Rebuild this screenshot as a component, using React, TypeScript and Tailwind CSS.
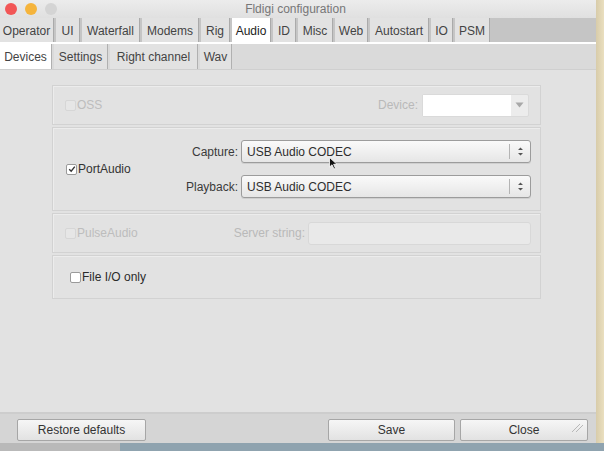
import React from 'react';

const topTabs = [
  { label: 'Operator', w: 'w-[54px]' },
  { label: 'UI', w: 'w-[24px]' },
  { label: 'Waterfall', w: 'w-[58px]' },
  { label: 'Modems', w: 'w-[57px]' },
  { label: 'Rig', w: 'w-[29px]' },
  { label: 'Audio', w: 'w-[39px]', active: true },
  { label: 'ID', w: 'w-[23px]' },
  { label: 'Misc', w: 'w-[35px]' },
  { label: 'Web', w: 'w-[33px]' },
  { label: 'Autostart', w: 'w-[59px]' },
  { label: 'IO', w: 'w-[22px]' },
  { label: 'PSM', w: 'w-[35px]' },
];

const subTabs = [
  { label: 'Devices', w: 'w-[52px]', active: true },
  { label: 'Settings', w: 'w-[54px]' },
  { label: 'Right channel', w: 'w-[88px]' },
  { label: 'Wav', w: 'w-[32px]' },
];

function Check({ checked, disabled }: { checked?: boolean; disabled?: boolean }) {
  return (
    <span
      className={`flex h-[11px] w-[11px] items-center justify-center rounded-[2px] border ${
        disabled ? 'border-[#d6d6d6] bg-[#e6e6e6]' : 'border-[#9a9a9a] bg-white'
      }`}
    >
      {checked && (
        <svg width="8" height="8" viewBox="0 0 8 8">
          <path d="M1.2 4.2 L3.2 6.2 L6.8 1.6" fill="none" stroke="#333" strokeWidth="1.4" />
        </svg>
      )}
    </span>
  );
}

function Select({ value }: { value: string }) {
  return (
    <div className="flex h-[23px] w-[290px] items-center rounded-[3px] border border-[#9c9c9c] bg-gradient-to-b from-[#fafafa] to-[#e6e6e6] shadow-[0_1px_0_#cfcfcf]">
      <span className="flex-1 pl-[5px] text-[12px] text-[#2e2e2e]">{value}</span>
      <span className="h-[15px] w-px bg-[#b4b4b4]" />
      <span className="flex w-[20px] justify-center">
        <svg width="7" height="11" viewBox="0 0 7 11">
          <path d="M1 4 L3.5 1.5 L6 4 Z M1 7 L3.5 9.5 L6 7 Z" fill="#555" />
        </svg>
      </span>
    </div>
  );
}

function Group({ className, children }: { className: string; children: React.ReactNode }) {
  return (
    <div className={`ml-[52px] flex w-[489px] items-center border border-[#d2d2d2] shadow-[inset_1px_1px_0_#ececec] ${className}`}>
      {children}
    </div>
  );
}

function Button({ label, className }: { label: string; className: string }) {
  return (
    <div
      className={`flex h-[22px] items-center justify-center rounded-[2px] border border-[#a6a6a6] bg-gradient-to-b from-[#f6f6f6] to-[#e2e2e2] text-[12px] text-[#333] ${className}`}
    >
      {label}
    </div>
  );
}

export default function App() {
  return (
    <div
      className="flex h-[451px] w-[604px] flex-col overflow-hidden bg-[#8fa3af]"
      style={{ fontFamily: '"Liberation Sans", Arial, sans-serif' }}
    >
      <div className="flex h-[443px]">
        <div className="relative flex w-[596px] flex-col bg-[#e2e2e2]">
          {/* title bar */}
          <div className="relative flex h-[18px] items-center bg-gradient-to-b from-[#ececec] to-[#e0e0e0]">
            <div className="flex gap-[8px] pl-[5px]">
              <span className="h-[12px] w-[12px] rounded-full bg-[#f25656]" />
              <span className="h-[12px] w-[12px] rounded-full bg-[#f5b43c]" />
              <span className="h-[12px] w-[12px] rounded-full bg-[#d4d4d4]" />
            </div>
            <span className="flex-1 pr-[62px] text-center text-[12px] text-[#777]">Fldigi configuration</span>
          </div>

          {/* top tabs */}
          <div className="flex h-[26px] gap-[2px] border-b-2 border-white bg-[#c5c5c5]">
            {topTabs.map((t) => (
              <div
                key={t.label}
                className={`flex items-center justify-center border-r border-[#aaaaaa] pt-[2px] text-[12px] ${t.w} ${
                  t.active ? '-mt-px bg-white text-[#222]' : 'bg-[#e2e2e2] text-[#444]'
                }`}
              >
                {t.label}
              </div>
            ))}
          </div>

          {/* sub tabs */}
          <div className="flex h-[26px] gap-[2px] border-b border-[#cfcfcf] bg-[#dadada]">
            {subTabs.map((t) => (
              <div
                key={t.label}
                className={`flex items-center justify-center border-r border-[#b0b0b0] text-[12px] ${t.w} ${
                  t.active ? 'bg-white text-[#444]' : 'bg-[#e2e2e2] text-[#444]'
                }`}
              >
                {t.label}
              </div>
            ))}
          </div>

          {/* content */}
          <div className="flex flex-1 flex-col gap-[2px] pt-[15px] text-[12px]">
            <Group className="h-[40px]">
              <div className="ml-[12px] flex items-center gap-[1px] text-[#bdbdbd]">
                <Check disabled />
                <span>OSS</span>
              </div>
              <span className="ml-auto mr-[4px] text-[#b9b9b9]">Device:</span>
              <div className="mr-[11px] flex h-[23px] w-[107px] items-center rounded-[2px] border border-[#dadada] bg-[#ececec]">
                <span className="h-full w-[88px] bg-white" />
                <span className="flex flex-1 justify-center">
                  <svg width="9" height="6" viewBox="0 0 9 6">
                    <path d="M0.5 0.5 L8.5 0.5 L4.5 5.5 Z" fill="#a8a8a8" />
                  </svg>
                </span>
              </div>
            </Group>

            <Group className="h-[84px]">
              <div className="ml-[13px] flex items-center gap-[1px] text-[#333]">
                <Check checked />
                <span>PortAudio</span>
              </div>
              <div className="ml-auto mr-[9px] flex flex-col gap-[12px]">
                <div className="flex items-center gap-[3px]">
                  <span className="w-[60px] text-right text-[#3a3a3a]">Capture:</span>
                  <Select value="USB Audio CODEC" />
                </div>
                <div className="flex items-center gap-[3px]">
                  <span className="w-[60px] text-right text-[#3a3a3a]">Playback:</span>
                  <Select value="USB Audio CODEC" />
                </div>
              </div>
            </Group>

            <Group className="h-[40px]">
              <div className="ml-[12px] flex items-center gap-[1px] text-[#bdbdbd]">
                <Check disabled />
                <span>PulseAudio</span>
              </div>
              <span className="ml-auto mr-[3px] text-[#b9b9b9]">Server string:</span>
              <div className="mr-[9px] h-[23px] w-[223px] rounded-[3px] border border-[#d8d8d8] bg-[#e9e9e9]" />
            </Group>

            <Group className="h-[44px]">
              <div className="ml-[17px] flex items-center gap-[1px] text-[#2a2a2a]">
                <Check />
                <span>File I/O only</span>
              </div>
            </Group>
          </div>

          {/* button bar */}
          <div className="flex h-[31px] items-center border-t-2 border-[#cdcdcd] bg-[#d5d5d5] pt-[2px]">
            <Button label="Restore defaults" className="ml-[17px] w-[129px]" />
            <Button label="Save" className="ml-auto w-[127px]" />
            <Button label="Close" className="ml-[5px] mr-[8px] w-[128px]" />
          </div>

          {/* resize grip */}
          <svg className="absolute bottom-[10px] right-[12px]" width="14" height="10" viewBox="0 0 14 10">
            <path d="M2 9 L10 1 M6 9 L13 2" stroke="#b8b8b8" strokeWidth="1" />
          </svg>

          {/* mouse pointer */}
          <svg className="absolute left-[329px] top-[157px]" width="9" height="13" viewBox="0 0 9 13">
            <path d="M0.5 0.5 L0.5 10 L3 7.8 L5 12 L6.5 11.3 L4.6 7.3 L8 7.3 Z" fill="#111" stroke="#fff" strokeWidth="0.8" />
          </svg>
        </div>
        <div className="w-[8px] bg-gradient-to-r from-[#d8ccaa] to-[#eadfbf]" />
      </div>
      <div className="flex h-[8px]">
        <div className="w-[120px] bg-[#b9b9b9]" />
      </div>
    </div>
  );
}
